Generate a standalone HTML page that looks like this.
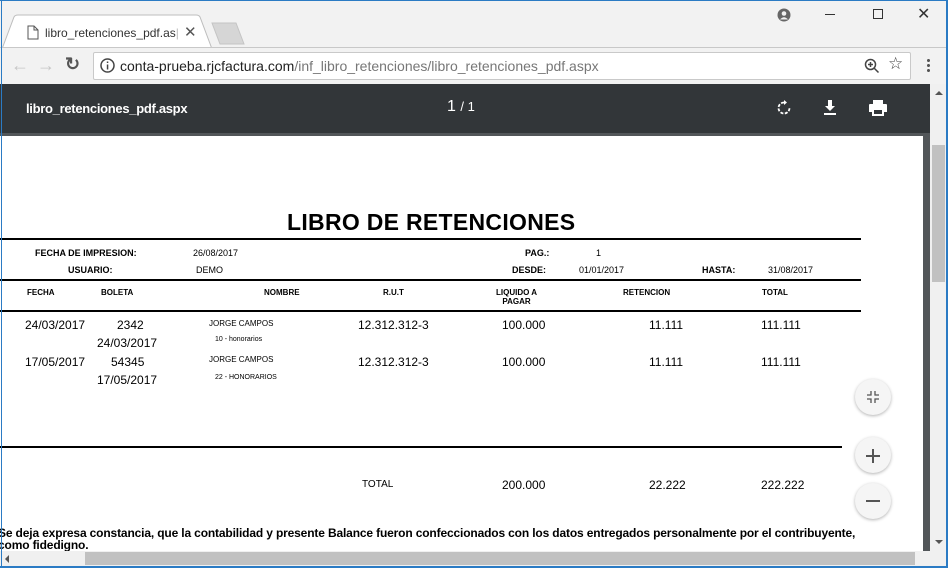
<!DOCTYPE html>
<html><head><meta charset="utf-8"><style>
*{margin:0;padding:0;box-sizing:border-box}
body{width:948px;height:568px;overflow:hidden;background:#fff;font-family:"Liberation Sans",Arial,sans-serif;position:relative}
.a{position:absolute;white-space:nowrap}
.b{font-weight:bold}
.h{font-size:9px;font-weight:bold}
.d{font-size:12px}
.line{position:absolute;background:#000;height:2px}
</style></head><body>
<div class="a" style="left:0;top:0;width:948px;height:48px;background:#f2f2f2"></div>
<div class="a" style="left:0;top:0;width:948px;height:1px;background:#2b7bc4"></div>
<svg class="a" style="left:0;top:14px" width="260" height="36"><path d="M2 35 L14 3 Q15 1 18 1 L196 1 Q199 1 200 3 L212 35 Z" fill="#fff" stroke="#bdbdbd"/><path d="M212 9 L236 9 L244 30 L220 30 Z" fill="#d6d6d6" stroke="#c4c4c4"/></svg>
<svg class="a" style="left:27px;top:25px" width="12" height="15"><path d="M1 1h6l4 4v9H1z M7 1v4h4" fill="none" stroke="#555" stroke-width="1"/></svg>
<div class="a" style="left:45px;top:26px;font-size:12px;color:#333">libro_retenciones_pdf.as<span style="color:#bbb">|</span></div>
<div class="a" style="left:184px;top:23px;font-size:15px;color:#555">✕</div>
<svg class="a" style="left:777px;top:8px" width="14" height="14"><circle cx="7" cy="7" r="6.5" fill="#666"/><circle cx="7" cy="5.5" r="2.3" fill="#f2f2f2"/><path d="M3 11.5 Q7 7 11 11.5" fill="#f2f2f2"/></svg>
<div class="a" style="left:825px;top:14px;width:10px;height:1px;background:#333"></div>
<div class="a" style="left:873px;top:9px;width:10px;height:10px;border:1px solid #333"></div>
<div class="a" style="left:917px;top:4px;font-size:16px;color:#333">✕</div>
<div class="a" style="left:0;top:47px;width:948px;height:37px;background:#f2f2f2;border-top:1px solid #c8c8c8"></div>
<div class="a" style="left:11px;top:55px;font-size:18px;color:#c6c6c6">←</div>
<div class="a" style="left:37px;top:55px;font-size:18px;color:#c6c6c6">→</div>
<div class="a" style="left:65px;top:54px;font-size:18px;color:#555;font-weight:bold">↻</div>
<div class="a" style="left:93px;top:52px;width:818px;height:28px;background:#fff;border:1px solid #c9c9c9;border-radius:2px"></div>
<svg class="a" style="left:100px;top:58px" width="15" height="15"><circle cx="7.5" cy="7.5" r="6.5" fill="none" stroke="#444" stroke-width="1.5"/><rect x="6.8" y="6.5" width="1.5" height="5" fill="#444"/><rect x="6.8" y="3.5" width="1.5" height="1.5" fill="#444"/></svg>
<div class="a" style="left:120px;top:58px;font-size:14px;color:#222">conta-prueba.rjcfactura.com<span style="color:#777">/inf_libro_retenciones/libro_retenciones_pdf.aspx</span></div>
<svg class="a" style="left:864px;top:58px" width="16" height="16"><circle cx="6.5" cy="6.5" r="5" fill="none" stroke="#444" stroke-width="1.5"/><path d="M10 10l4.5 4.5M4 6.5h5M6.5 4v5" stroke="#444" stroke-width="1.5"/></svg>
<div class="a" style="left:888px;top:54px;font-size:17px;color:#444">☆</div>
<div class="a" style="left:927px;top:58px;width:3px;height:14px;background:radial-gradient(circle,#555 1.4px,transparent 1.6px) 0 0/3px 5px"></div>
<div class="a" style="left:0;top:84px;width:931px;height:484px;background:#525659"></div>
<div class="a" style="left:0;top:84px;width:931px;height:49px;background:#323639"></div>
<div class="a" style="left:26px;top:101px;font-size:13px;color:#fff;font-weight:bold;letter-spacing:-0.3px">libro_retenciones_pdf.aspx</div>
<div class="a" style="left:447px;top:98px;font-size:16px;color:#fff">1 <span style="font-size:13px">/ 1</span></div>
<svg class="a" style="left:776px;top:100px" width="16" height="16"><path d="M8 2.5 A5.5 5.5 0 1 0 13.5 8" fill="none" stroke="#fff" stroke-width="1.8" stroke-dasharray="3 1.5"/><path d="M8 0v5l3-2.5z" fill="#fff"/></svg>
<svg class="a" style="left:823px;top:99px" width="14" height="17"><path d="M5 1h4v6h3l-5 5-5-5h3z M1 14h12v2H1z" fill="#fff"/></svg>
<svg class="a" style="left:869px;top:100px" width="18" height="16"><path d="M4 0h10v4H4z M1 4h16a1 1 0 0 1 1 1v7h-3v4H3v-4H0V5a1 1 0 0 1 1-1z" fill="#fff"/><rect x="5" y="10" width="8" height="4" fill="#323639"/></svg>
<div class="a" style="left:0;top:136px;width:923px;height:415px;background:#fff"></div>
<div class="a b" style="left:287px;top:209px;font-size:23px;letter-spacing:0.3px">LIBRO DE RETENCIONES</div>
<div class="line" style="left:0;top:238px;width:861px"></div>
<div class="a h" style="left:35px;top:248px">FECHA DE IMPRESION:</div>
<div class="a" style="left:193px;top:248px;font-size:9px">26/08/2017</div>
<div class="a h" style="left:525px;top:248px">PAG.:</div>
<div class="a" style="left:596px;top:248px;font-size:9px">1</div>
<div class="a h" style="left:68px;top:265px">USUARIO:</div>
<div class="a" style="left:196px;top:265px;font-size:9px">DEMO</div>
<div class="a h" style="left:512px;top:265px">DESDE:</div>
<div class="a" style="left:579px;top:265px;font-size:9px">01/01/2017</div>
<div class="a h" style="left:702px;top:265px">HASTA:</div>
<div class="a" style="left:768px;top:265px;font-size:9px">31/08/2017</div>
<div class="line" style="left:0;top:279px;width:861px"></div>
<div class="a h" style="left:27px;top:288px;font-size:8px">FECHA</div>
<div class="a h" style="left:101px;top:288px;font-size:8px">BOLETA</div>
<div class="a h" style="left:264px;top:288px;font-size:8px">NOMBRE</div>
<div class="a h" style="left:383px;top:288px;font-size:8px">R.U.T</div>
<div class="a h" style="left:496px;top:288px;font-size:8px;text-align:center;line-height:9px">LIQUIDO A<br>PAGAR</div>
<div class="a h" style="left:623px;top:288px;font-size:8px">RETENCION</div>
<div class="a h" style="left:762px;top:288px;font-size:8px">TOTAL</div>
<div class="line" style="left:0;top:310px;width:861px"></div>
<div class="a d" style="left:25px;top:318px">24/03/2017</div>
<div class="a d" style="left:117px;top:318px">2342</div>
<div class="a" style="left:209px;top:319px;font-size:8px">JORGE CAMPOS</div>
<div class="a d" style="left:358px;top:318px">12.312.312-3</div>
<div class="a d" style="left:502px;top:318px">100.000</div>
<div class="a d" style="left:649px;top:318px">11.111</div>
<div class="a d" style="left:761px;top:318px">111.111</div>
<div class="a d" style="left:97px;top:336px">24/03/2017</div>
<div class="a" style="left:215px;top:336px;font-size:7px">10 - honorarios</div>
<div class="a d" style="left:25px;top:355px">17/05/2017</div>
<div class="a d" style="left:111px;top:355px">54345</div>
<div class="a" style="left:209px;top:355px;font-size:8px">JORGE CAMPOS</div>
<div class="a d" style="left:358px;top:355px">12.312.312-3</div>
<div class="a d" style="left:502px;top:355px">100.000</div>
<div class="a d" style="left:649px;top:355px">11.111</div>
<div class="a d" style="left:761px;top:355px">111.111</div>
<div class="a d" style="left:97px;top:373px">17/05/2017</div>
<div class="a" style="left:215px;top:374px;font-size:7px">22 - HONORARIOS</div>
<div class="line" style="left:0;top:446px;width:842px"></div>
<div class="a" style="left:362px;top:479px;font-size:10px">TOTAL</div>
<div class="a d" style="left:502px;top:478px">200.000</div>
<div class="a d" style="left:649px;top:478px">22.222</div>
<div class="a d" style="left:761px;top:478px">222.222</div>
<div class="a b" style="left:-2px;top:527px;font-size:12px;line-height:12px;letter-spacing:-0.15px">Se deja expresa constancia, que la contabilidad y presente Balance fueron confeccionados con los datos entregados personalmente por el contribuyente,<br>como fidedigno.</div>
<div class="a" style="left:855px;top:379px;width:36px;height:36px;border-radius:50%;background:#f5f5f5;box-shadow:0 1px 3px rgba(0,0,0,.3)"></div>
<svg class="a" style="left:866px;top:390px" width="14" height="14"><path d="M5 1v4H1M9 1v4h4M5 13V9H1M9 13V9h4" fill="none" stroke="#555" stroke-width="1.3"/></svg>
<div class="a" style="left:855px;top:437px;width:36px;height:36px;border-radius:50%;background:#f5f5f5;box-shadow:0 1px 3px rgba(0,0,0,.3)"></div>
<div class="a" style="left:866px;top:455px;width:14px;height:1.5px;background:#555"></div>
<div class="a" style="left:872px;top:449px;width:1.5px;height:14px;background:#555"></div>
<div class="a" style="left:855px;top:483px;width:36px;height:36px;border-radius:50%;background:#f5f5f5;box-shadow:0 1px 3px rgba(0,0,0,.3)"></div>
<div class="a" style="left:866px;top:500px;width:14px;height:1.5px;background:#555"></div>
<div class="a" style="left:930px;top:84px;width:17px;height:484px;background:#f0f0f0"></div>
<div class="a" style="left:932px;top:145px;width:13px;height:137px;background:#c1c1c1"></div>
<div class="a" style="left:935px;top:91px;width:0;height:0;border:4px solid transparent;border-bottom-color:#555;border-top:0"></div>
<div class="a" style="left:935px;top:540px;width:0;height:0;border:4px solid transparent;border-top-color:#555;border-bottom:0"></div>
<div class="a" style="left:0;top:551px;width:930px;height:16px;background:#f0f0f0"></div>
<div class="a" style="left:85px;top:552px;width:830px;height:13px;background:#c1c1c1"></div>
<div class="a" style="left:5px;top:555px;width:0;height:0;border:4px solid transparent;border-right-color:#555;border-left:0"></div>
<div class="a" style="left:1px;top:0;width:1px;height:568px;background:#2b7bc4"></div>
<div class="a" style="left:946px;top:0;width:2px;height:568px;background:#2b7bc4"></div>
<div class="a" style="left:0;top:566px;width:948px;height:2px;background:#2b7bc4"></div>
</body></html>
